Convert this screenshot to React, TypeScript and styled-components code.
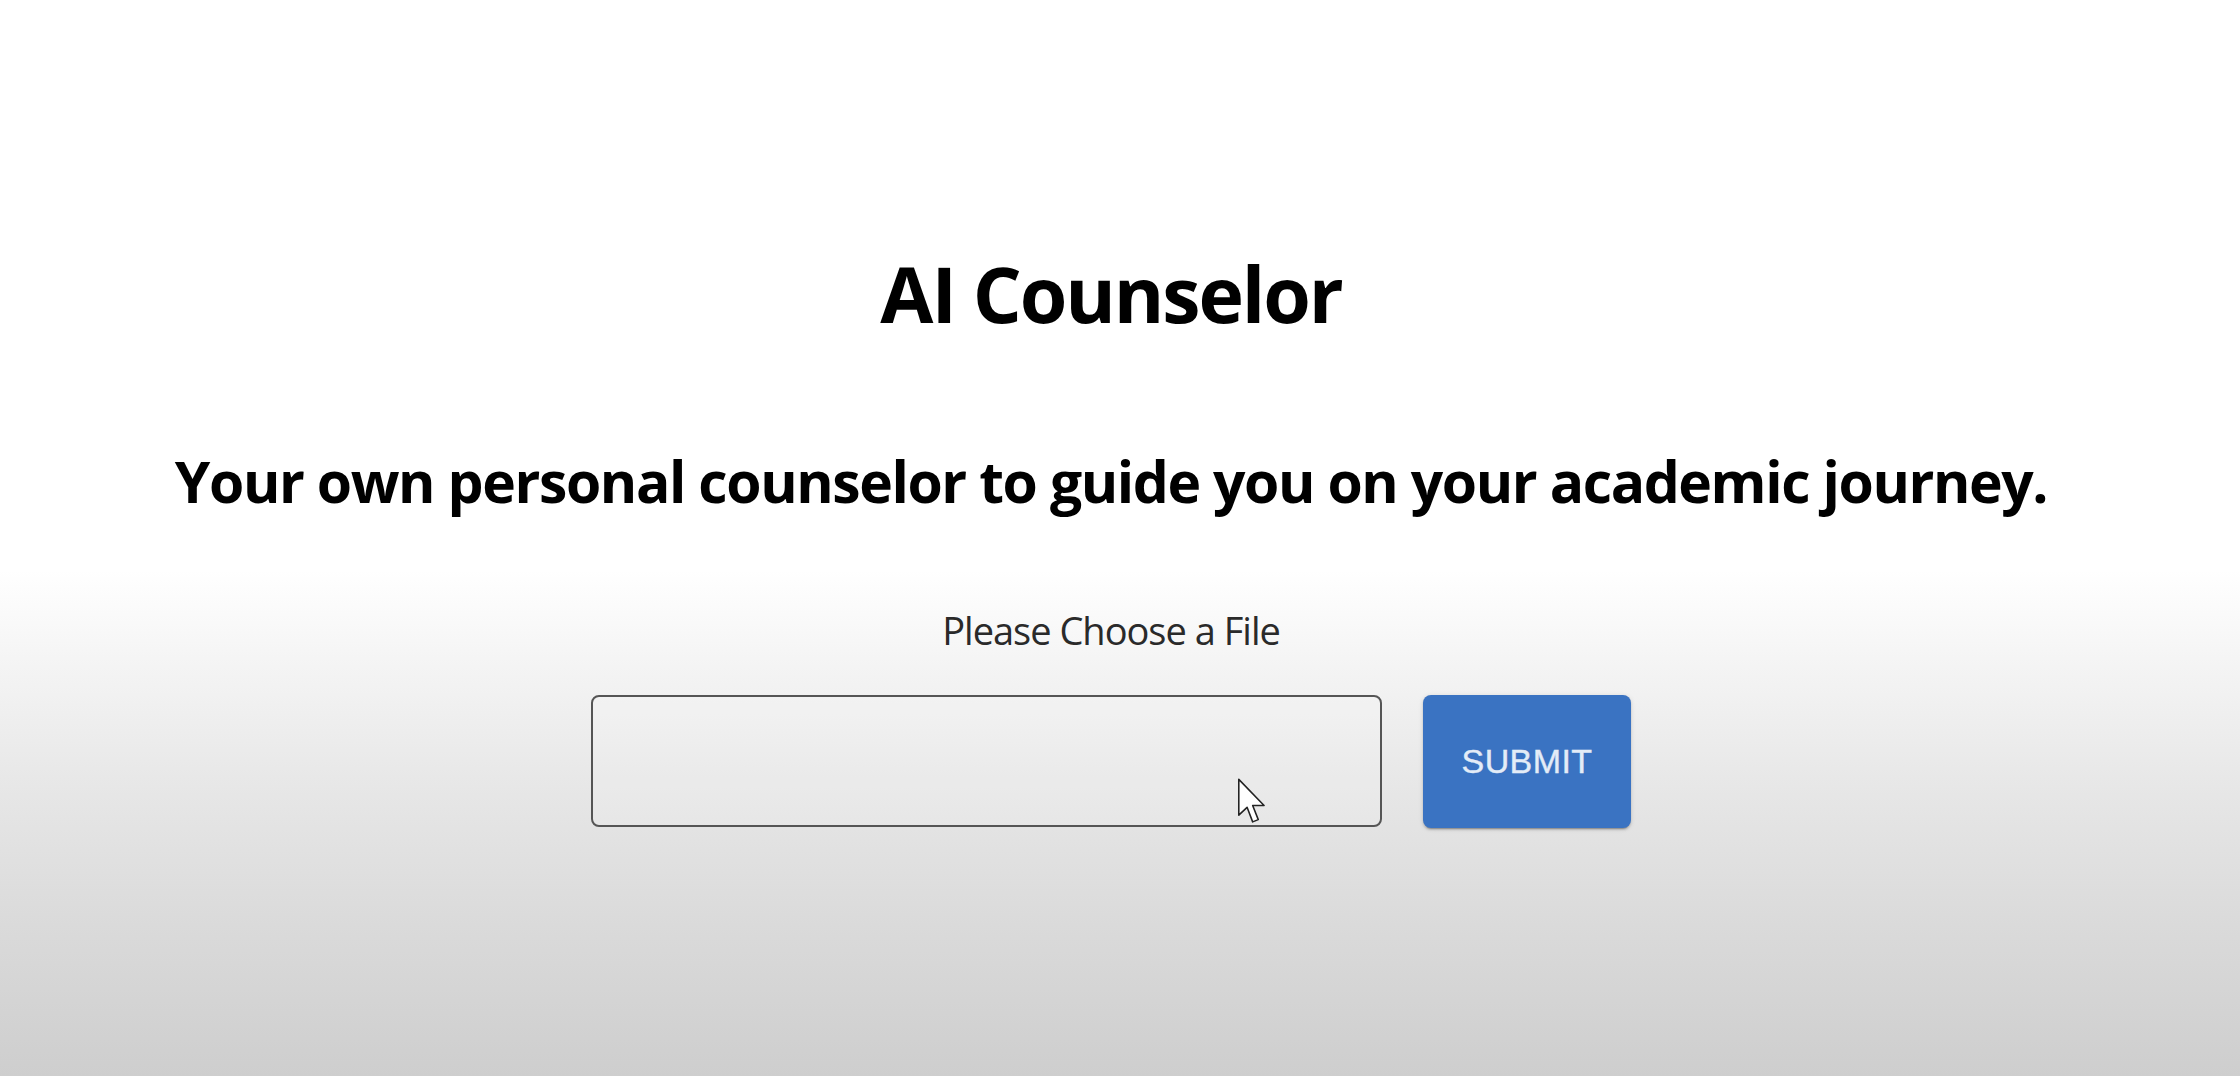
import React from "react";
import styled, { createGlobalStyle } from "styled-components";

const GlobalStyle = createGlobalStyle`
  html, body {
    margin: 0;
    padding: 0;
    height: 100%;
  }
  body {
    font-family: "Open Sans", "Noto Sans", sans-serif;
    background: linear-gradient(
      to bottom,
      #ffffff 0%,
      #ffffff 53%,
      #f4f4f4 62%,
      #e6e6e6 74%,
      #dadada 86%,
      #cecece 100%
    );
    background-attachment: fixed;
    overflow: hidden;
  }
  #root {
    min-height: 100vh;
  }
`;

const Page = styled.main`
  position: relative;
  min-height: 100vh;
  box-sizing: border-box;
  display: flex;
  flex-direction: column;
  align-items: center;
  padding: 255px 18px 0 0;
  color: #000;
`;

const Title = styled.h1`
  margin: 0;
  font-family: "Open Sans", "Noto Sans", sans-serif;
  font-weight: 700;
  font-size: 77px;
  line-height: 1;
  letter-spacing: -2.1px;
`;

const Subtitle = styled.h2`
  margin: 121px 0 0;
  font-family: "Open Sans", "Noto Sans", sans-serif;
  font-weight: 700;
  font-size: 57px;
  line-height: 1;
  letter-spacing: -1.4px;
  white-space: nowrap;
`;

const Label = styled.p`
  margin: 101px 0 0;
  font-family: "Open Sans", "Noto Sans", sans-serif;
  font-weight: 400;
  font-size: 38px;
  line-height: 1;
  letter-spacing: -1px;
  color: #2a2a2a;
`;

const Row = styled.form`
  margin-top: 46px;
  display: flex;
  align-items: stretch;
  gap: 41px;
`;

const FileBox = styled.div`
  position: relative;
  width: 791px;
  height: 132px;
  box-sizing: border-box;
  border: 2px solid #555555;
  border-radius: 8px;
  background: rgba(255, 255, 255, 0.12);
`;

const SubmitButton = styled.button`
  width: 208px;
  height: 133px;
  border: none;
  border-radius: 8px;
  background: #3a73c2;
  color: #e3ecf7;
  font-family: "Liberation Sans", Arial, sans-serif;
  font-weight: 400;
  font-size: 34px;
  letter-spacing: 0.4px;
  text-transform: uppercase;
  cursor: pointer;
  -webkit-text-stroke: 0.4px #e3ecf7;
  box-shadow: 0 3px 1px -2px rgba(0, 0, 0, 0.2), 0 2px 2px 0 rgba(0, 0, 0, 0.14),
    0 1px 5px 0 rgba(0, 0, 0, 0.12);
`;

const Pointer = styled.svg`
  position: absolute;
  left: 644px;
  top: 81px;
  width: 30px;
  height: 47px;
  pointer-events: none;
`;

export default function App() {
  return (
    <>
      <GlobalStyle />
      <Page>
        <Title>AI Counselor</Title>
        <Subtitle>Your own personal counselor to guide you on your academic journey.</Subtitle>
        <Label>Please Choose a File</Label>
        <Row onSubmit={(e) => e.preventDefault()}>
          <FileBox>
            <Pointer viewBox="0 0 13 21">
              <path
                d="M0.6 0.6 L0.6 16.6 L4.3 13.1 L6.8 19.6 L9.3 18.6 L6.8 12.3 L11.9 12.3 Z"
                fill="#ffffff"
                stroke="#222222"
                strokeWidth="0.7"
                strokeLinejoin="round"
              />
            </Pointer>
          </FileBox>
          <SubmitButton type="submit">Submit</SubmitButton>
        </Row>
      </Page>
    </>
  );
}
